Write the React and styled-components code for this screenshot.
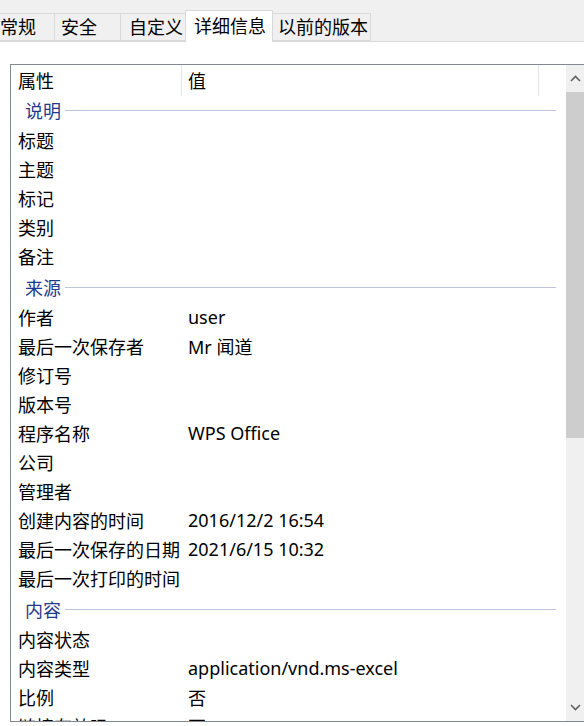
import React from "react";
import styled, { createGlobalStyle } from "styled-components";

const GlobalStyle = createGlobalStyle`
  html, body { margin: 0; padding: 0; background: #ffffff; overflow: hidden; }
  body { font-family: "Noto Sans", "Noto Sans CJK SC", sans-serif; }
`;

const Page = styled.div`
  width: 584px;
  height: 726px;
  overflow: hidden;
  background: #ffffff;
  font-size: 18px;
  color: #000;
`;

const TabStrip = styled.div`
  height: 41px;
  background: #f0f0f0;
  border-bottom: 1px solid #d9d9d9;
  display: flex;
  align-items: flex-end;
  box-sizing: content-box;
`;

const Tab = styled.div`
  box-sizing: border-box;
  width: ${(p) => p.$w}px;
  height: ${(p) => (p.$active ? 32 : 28)}px;
  margin-bottom: ${(p) => (p.$active ? -1 : 0)}px;
  padding-left: ${(p) => p.$pl}px;
  padding-bottom: 1px;
  background: ${(p) => (p.$active ? "#ffffff" : "#f0f0f0")};
  border: 1px solid #d9d9d9;
  border-bottom: ${(p) => (p.$active ? "none" : "1px solid #d9d9d9")};
  border-left: ${(p) => (p.$first ? "none" : "1px solid #d9d9d9")};
  margin-left: ${(p) => (p.$first ? 0 : -1)}px;
  position: relative;
  z-index: ${(p) => (p.$active ? 1 : 0)};
  display: flex;
  align-items: center;
  white-space: nowrap;
  line-height: 1;
`;

const Panel = styled.div`
  padding: 22px 0 0 10px;
`;

const ListBox = styled.div`
  width: 576px;
  height: 658px;
  box-sizing: border-box;
  border: 1px solid #828790;
  display: grid;
  grid-template-columns: 555px 19px;
  overflow: hidden;
`;

const Content = styled.div`
  overflow: hidden;
`;

const HeaderRow = styled.div`
  height: 30px;
  display: grid;
  grid-template-columns: 171px 357px 1fr;
`;

const HeaderCell = styled.div`
  display: flex;
  align-items: center;
  padding-left: ${(p) => p.$pl}px;
  padding-bottom: 2px;
  border-right: ${(p) => (p.$divider ? "1px solid #e5e5e5" : "none")};
  margin-bottom: -1px;
`;

const GroupRow = styled.div`
  box-sizing: border-box;
  height: 32px;
  display: flex;
  align-items: center;
  padding: 0 10px 2px 14px;
  gap: 4px;
  color: #1e3a8c;
`;

const GroupLine = styled.div`
  flex: 1;
  height: 1px;
  background: #c0c3dd;
  margin-top: 1px;
`;

const ItemRow = styled.div`
  box-sizing: border-box;
  height: 29px;
  display: grid;
  grid-template-columns: 170px 1fr;
  align-items: center;
  padding-left: 7px;
  padding-bottom: 5px;
  white-space: nowrap;
`;

const Scrollbar = styled.div`
  background: #f0f0f0;
  display: flex;
  flex-direction: column;
`;

const ArrowButton = styled.div`
  height: 27px;
  display: flex;
  align-items: center;
  justify-content: center;
  flex-shrink: 0;
`;

const Track = styled.div`
  flex: 1;
  display: flex;
  flex-direction: column;
`;

const Thumb = styled.div`
  height: 346px;
  background: #cdcdcd;
`;

const Chevron = ({ up }) => (
  <svg width="11" height="7" viewBox="0 0 11 7">
    <path
      d={up ? "M1 6 L5.5 1.5 L10 6" : "M1 1 L5.5 5.5 L10 1"}
      fill="none"
      stroke="#606060"
      strokeWidth="1.6"
    />
  </svg>
);

const tabs = [
  { label: "常规", w: 55, pl: 0, first: true },
  { label: "安全", w: 67, pl: 6 },
  { label: "自定义", w: 66, pl: 8 },
  { label: "详细信息", w: 88, pl: 8, active: true },
  { label: "以前的版本", w: 99, pl: 5 },
];

const sections = [
  {
    title: "说明",
    items: [["标题"], ["主题"], ["标记"], ["类别"], ["备注"]],
  },
  {
    title: "来源",
    items: [
      ["作者", "user"],
      ["最后一次保存者", "Mr 闻道"],
      ["修订号"],
      ["版本号"],
      ["程序名称", "WPS Office"],
      ["公司"],
      ["管理者"],
      ["创建内容的时间", "2016/12/2 16:54"],
      ["最后一次保存的日期", "2021/6/15 10:32"],
      ["最后一次打印的时间"],
    ],
  },
  {
    title: "内容",
    items: [
      ["内容状态"],
      ["内容类型", "application/vnd.ms-excel"],
      ["比例", "否"],
      ["链接有效吗?", "否"],
    ],
  },
];

export default function App() {
  return (
    <Page>
      <GlobalStyle />
      <TabStrip>
        {tabs.map((t) => (
          <Tab key={t.label} $w={t.w} $pl={t.pl} $active={t.active} $first={t.first}>
            {t.label}
          </Tab>
        ))}
      </TabStrip>
      <Panel>
        <ListBox>
          <Content>
            <HeaderRow>
              <HeaderCell $pl={7} $divider>属性</HeaderCell>
              <HeaderCell $pl={6} $divider>值</HeaderCell>
              <HeaderCell $pl={0} />
            </HeaderRow>
            {sections.map((s) => (
              <React.Fragment key={s.title}>
                <GroupRow>
                  <span>{s.title}</span>
                  <GroupLine />
                </GroupRow>
                {s.items.map(([k, v]) => (
                  <ItemRow key={k}>
                    <span>{k}</span>
                    <span>{v || ""}</span>
                  </ItemRow>
                ))}
              </React.Fragment>
            ))}
          </Content>
          <Scrollbar>
            <ArrowButton>
              <Chevron up />
            </ArrowButton>
            <Track>
              <Thumb />
            </Track>
            <ArrowButton>
              <Chevron />
            </ArrowButton>
          </Scrollbar>
        </ListBox>
      </Panel>
    </Page>
  );
}
